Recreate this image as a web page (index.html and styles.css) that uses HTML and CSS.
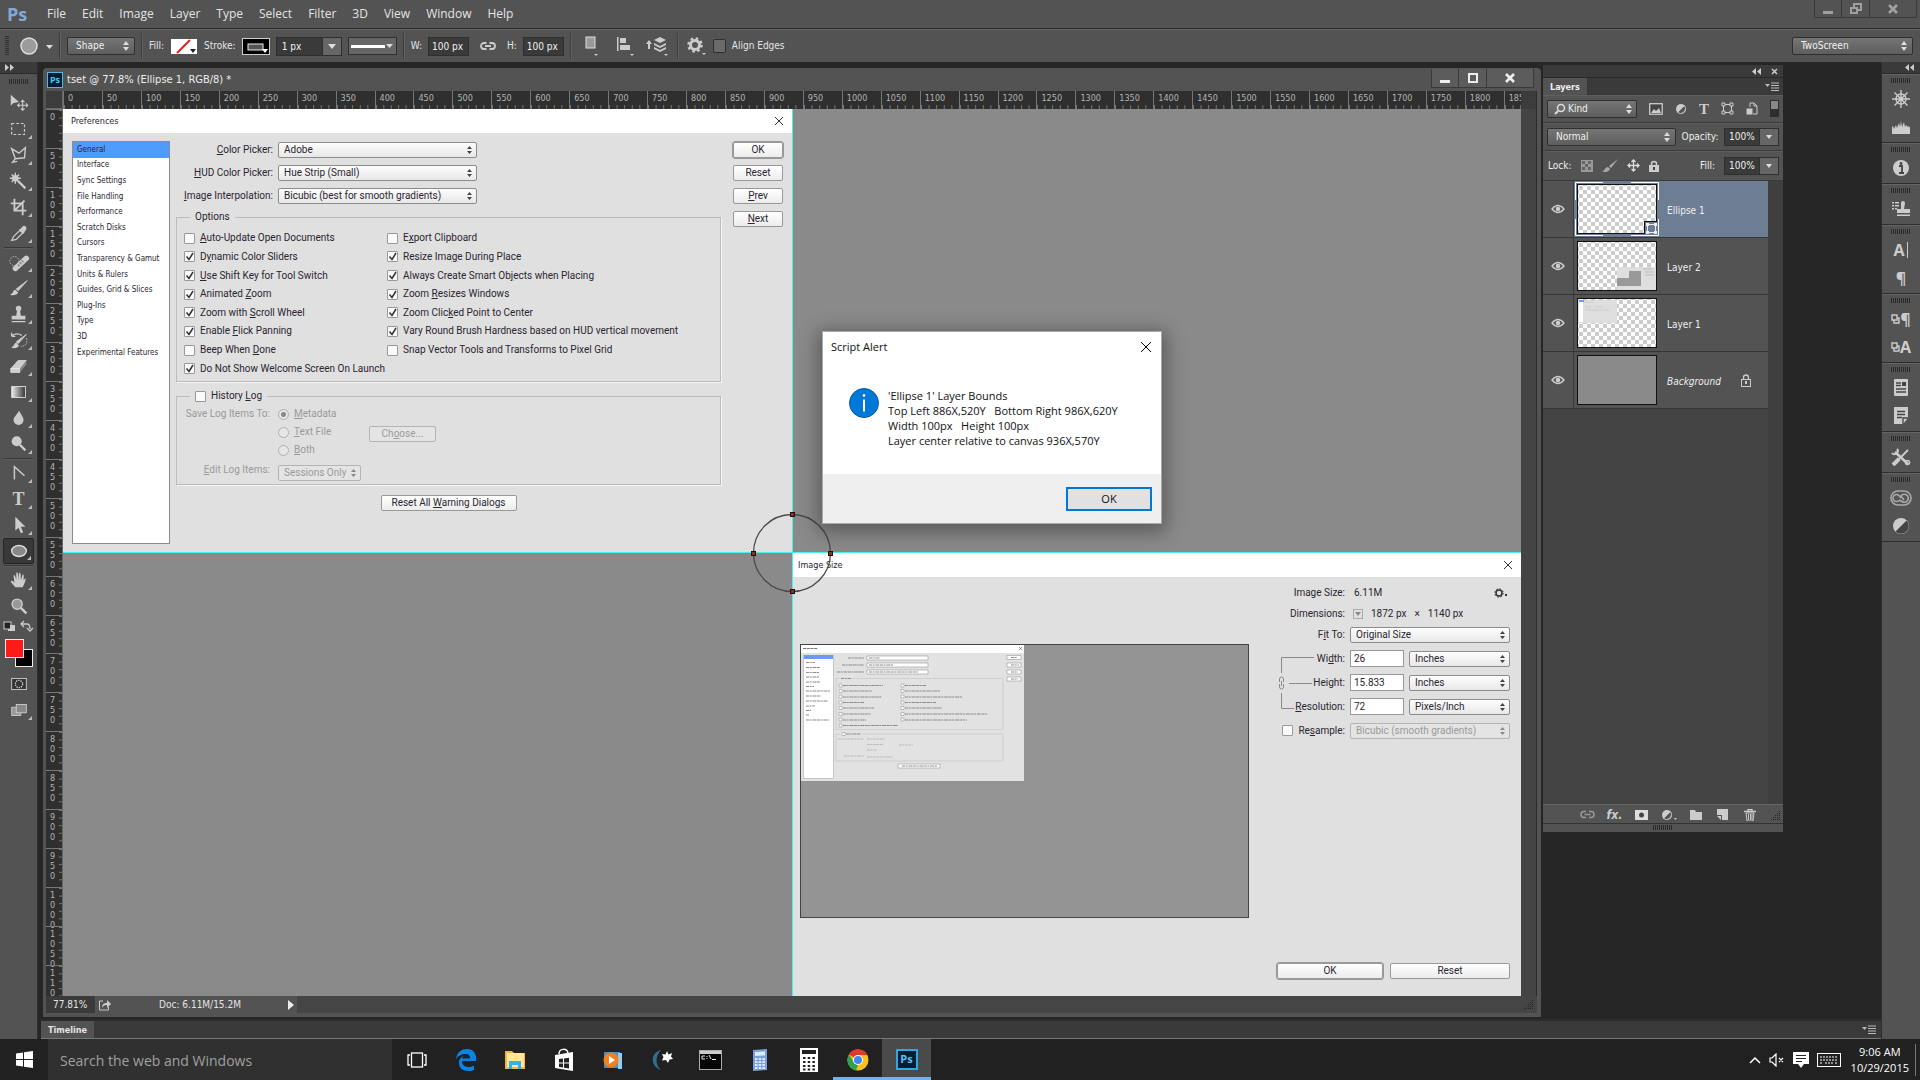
FILE: index.html
```html
<!DOCTYPE html>
<html lang="en">
<head>
<meta charset="utf-8">
<title>tset @ 77.8% (Ellipse 1, RGB/8)</title>
<link rel="stylesheet" href="styles.css">
</head>
<body>
<header class="menubar">
  <span class="ps-logo">Ps</span>
  <nav class="menus">
    <a href="#">File</a><a href="#">Edit</a><a href="#">Image</a><a href="#">Layer</a><a href="#">Type</a><a href="#">Select</a><a href="#">Filter</a><a href="#">3D</a><a href="#">View</a><a href="#">Window</a><a href="#">Help</a>
  </nav>
  <div class="win-buttons">
    <button aria-label="Minimize"><svg width="12" height="12"><rect x="1" y="8" width="10" height="3" fill="#a0a0a0"/></svg></button>
    <button aria-label="Restore"><svg width="14" height="12" fill="none" stroke="#a0a0a0" stroke-width="2"><path d="M5 4V1h7v6H9M2 5h6v5H2z"/></svg></button>
    <button class="wide" aria-label="Close"><svg width="12" height="12" stroke="#a0a0a0" stroke-width="2.6"><path d="M2 2l8 8M10 2l-8 8"/></svg></button>
  </div>
</header>

<section class="optbar">
  <span class="grip-v"></span>
  <button class="ghost preset" aria-label="Tool preset"><svg width="32" height="20"><circle cx="10" cy="10" r="8" fill="#9c9c9c" stroke="#ddd" stroke-width="1.5"/><path d="M27 9h7l-3.500 4z" fill="#ddd"/></svg></button>
  <span class="vsep"></span>
  <select class="dark w68" aria-label="Tool mode"><option>Shape</option></select>
  <span class="vsep"></span>
  <span class="lbl">Fill:</span>
  <button class="swatch" aria-label="Fill"><svg width="28" height="17"><rect x="1" y="1" width="26" height="15" fill="#fff"/><path d="M7 15L20 2" stroke="#d22" stroke-width="2"/><path d="M20 11h6l-3 4z" fill="#222"/></svg></button>
  <span class="lbl">Stroke:</span>
  <button class="swatch" aria-label="Stroke"><svg width="28" height="17"><rect width="28" height="17" fill="#ccc"/><rect x="1" y="1" width="26" height="15" fill="#000"/><rect x="6" y="6" width="15" height="6" fill="#555" stroke="#eee"/><path d="M20 11h6l-3 4z" fill="#fff"/></svg></button>
  <span class="combo"><input class="w46" aria-label="Stroke width" value="1 px"><button aria-label="Stroke width presets"><svg width="8" height="5"><path d="M0 0h8L4 5z" fill="#ddd"/></svg></button></span>
  <button class="dark linebtn" aria-label="Stroke style"><svg width="42" height="8"><rect y="3" width="34" height="3" fill="#fff"/><path d="M35 2h7l-3.500 4z" fill="#ddd"/></svg></button>
  <span class="vsep"></span>
  <label class="lbl" for="ow">W:</label><input class="num" id="ow" value="100 px">
  <svg class="link" width="16" height="12" fill="none" stroke="#ccc" stroke-width="1.8"><path d="M6.500 3H4a3 3 0 0 0 0 6h2.500M9.500 3H12a3 3 0 0 1 0 6H9.500M5 6h6"/></svg>
  <label class="lbl" for="oh">H:</label><input class="num" id="oh" value="100 px">
  <span class="vsep"></span>
  <button class="ghost op" aria-label="Path operations"><svg width="22" height="22"><rect x="6" y="2" width="9" height="11" fill="#9a9a9a" stroke="#ddd"/><path d="M14 19h4l-2 2z" fill="#ccc"/></svg></button>
  <button class="ghost op" aria-label="Path alignment"><svg width="22" height="22" fill="#ccc"><path d="M4 2h1.500v14H4zM7 3h6v5H7zM7 10h10v5H7z"/><path d="M17 19h4l-2 2z"/></svg></button>
  <button class="ghost op" aria-label="Path arrangement"><svg width="26" height="22" fill="#ccc"><path d="M16 2l6 3-6 3-6-3zM10 8l6 3 6-3v2l-6 3-6-3zM10 12l6 3 6-3v2l-6 3-6-3z"/><path d="M5 5l3 4H6v5H4V9H2z"/><path d="M20 19h4l-2 2z"/></svg></button>
  <span class="vsep"></span>
  <button class="ghost" aria-label="Options"><svg width="22" height="22"><circle cx="10" cy="10" r="4.500" fill="none" stroke="#ccc" stroke-width="3"/><circle cx="10" cy="10" r="6.500" fill="none" stroke="#ccc" stroke-width="2.500" stroke-dasharray="2.500 2.600"/><path d="M17 18h4l-2 2z" fill="#ccc"/></svg></button>
  <input type="checkbox" class="dchk" id="align"><label class="lbl" for="align">Align Edges</label>
  <select class="dark ws" aria-label="Workspace"><option>TwoScreen</option></select>
</section>

<main class="work">
  <aside class="tools">
    <div class="strip left"><svg width="11" height="7" fill="#ccc"><path d="M0 0l4 3.500L0 7zM5 0l4 3.500L5 7z"/></svg></div>
    <span class="grip-h"></span>
    <button aria-label="Move"><svg viewBox="0 0 24 24"><path d="M3 3v12l3-3 6-1z" fill="#ccc"/><path d="M16 9v11M10.500 14.500h11M14 11l2-2 2 2M14 18l2 2 2-2M12.500 12.500l-2 2 2 2M19.500 12.500l2 2-2 2" fill="none" stroke="#ccc" stroke-width="1.200"/></svg></button>
    <button class="more" aria-label="Marquee"><svg viewBox="0 0 24 24"><rect x="4" y="6" width="14" height="12" fill="none" stroke="#ccc" stroke-width="1.300" stroke-dasharray="3 2"/></svg></button>
    <button class="more" aria-label="Lasso"><svg viewBox="0 0 24 24"><path d="M4 5l8 5 7-6-1 11-10 1zM8 16l-3 4 5-1" fill="none" stroke="#ccc" stroke-width="1.500"/></svg></button>
    <button class="more" aria-label="Magic wand"><svg viewBox="0 0 24 24"><path d="M8 3v12M2 9h12M4 5l8 8M12 5l-8 8" stroke="#ccc" stroke-width="1.500"/><circle cx="8" cy="9" r="3.500" fill="#ccc"/><path d="M11 12l8 8" stroke="#ccc" stroke-width="2.500"/></svg></button>
    <button class="more" aria-label="Crop"><svg viewBox="0 0 24 24"><path d="M7 3v13h13M3 8h13v13M7 16l11-11" fill="none" stroke="#ccc" stroke-width="2"/></svg></button>
    <button class="more" aria-label="Eyedropper"><svg viewBox="0 0 24 24"><path d="M4 20l2-4 7-7 3 3-7 7z" fill="none" stroke="#ccc" stroke-width="1.300"/><path d="M12 8l5 5 1-2 2-3c1-3-3-5-4-3l-2 2z" fill="#ccc"/></svg></button>
    <hr>
    <button class="more" aria-label="Healing brush"><svg viewBox="0 0 24 24"><path d="M8 19L20 8" stroke="#ccc" stroke-width="6" stroke-linecap="round"/><path d="M11 16l6-6" stroke="#888" stroke-width="3" stroke-dasharray="1.500 1.500"/><circle cx="7" cy="11" r="5" fill="none" stroke="#ccc" stroke-dasharray="1.500 1.500"/></svg></button>
    <button class="more" aria-label="Brush"><svg viewBox="0 0 24 24"><path d="M21 4L11 15l-2-2z" fill="#ccc" stroke="#ccc"/><path d="M2 19c4 0 3-5 6-5l3 3c-1 3-6 4-9 2z" fill="#ccc"/></svg></button>
    <button class="more" aria-label="Clone stamp"><svg viewBox="0 0 24 24" fill="#ccc"><circle cx="11.500" cy="6" r="3"/><path d="M10 7h3l1 7h5v4H4v-4h5zM4 19.500h15v1.500H4z"/></svg></button>
    <button class="more" aria-label="History brush"><svg viewBox="0 0 24 24"><path d="M20 6L11 16l-2-2z" fill="#ccc" stroke="#ccc"/><path d="M3 20c4 0 3-5 6-5l3 3c-1 3-6 4-9 2z" fill="#ccc"/><path d="M4 8c3-4 8-3 11-1M4 8V4M4 8h4" fill="none" stroke="#ccc" stroke-width="1.500"/><path d="M20 10c2 6-2 9-6 9" fill="none" stroke="#ccc" stroke-dasharray="1.500 1.500"/></svg></button>
    <button class="more" aria-label="Eraser"><svg viewBox="0 0 24 24"><path d="M3 15l8-9h9l-7 9zM3 15h10v4H3z" fill="#ccc" stroke="#eee" stroke-width=".7"/><path d="M13 15l7-9v4l-7 9z" fill="#888"/></svg></button>
    <button class="more" aria-label="Gradient"><svg viewBox="0 0 24 24"><defs><linearGradient id="gr"><stop stop-color="#eee"/><stop offset="1" stop-color="#333"/></linearGradient></defs><rect x="4" y="6" width="15" height="12" fill="url(#gr)" stroke="#ddd"/></svg></button>
    <button class="more" aria-label="Blur"><svg viewBox="0 0 24 24"><path d="M12 4c2 4 5 7 5 10a5.500 5.500 0 0 1-11 0c0-3 4-6 6-10z" fill="#ccc"/></svg></button>
    <button class="more" aria-label="Dodge"><svg viewBox="0 0 24 24"><circle cx="9.500" cy="9" r="5.500" fill="#ccc"/><path d="M13 13l6 6" stroke="#ccc" stroke-width="2.500"/></svg></button>
    <hr>
    <button class="more" aria-label="Pen"><svg viewBox="0 0 24 24"><path d="M7 19V5l11 10" fill="none" stroke="#ccc" stroke-width="1.600"/></svg></button>
    <button class="more serif" aria-label="Type">T</button>
    <button class="more" aria-label="Path selection"><svg viewBox="0 0 24 24"><path d="M8 3v15l3.500-3 2.500 6 2.500-1-2.500-6h5z" fill="#ccc"/></svg></button>
    <button class="more on" aria-label="Ellipse"><svg viewBox="0 0 24 24"><ellipse cx="12" cy="12" rx="8" ry="6" fill="#888" stroke="#ddd" stroke-width="1.500"/></svg></button>
    <hr>
    <button class="more" aria-label="Hand"><svg viewBox="0 0 24 24"><path d="M8 20c-2-3-5-5-5-7 2-1 3 1 4 2L6 7c2-1 2 1 3 5V4c2-1 2 1 2 8l1-8c2 0 2 1 2 8l2-6c2 0 1 3 1 6l2-2c1 1-1 6-3 10z" fill="#ccc"/></svg></button>
    <button aria-label="Zoom"><svg viewBox="0 0 24 24"><circle cx="10" cy="10" r="5.500" fill="#999" stroke="#ccc" stroke-width="1.500"/><path d="M14 14l6 6" stroke="#ccc" stroke-width="2.800"/></svg></button>
    <svg class="swatches" width="38" height="52"><rect x="4" y="3" width="7" height="7" fill="#222" stroke="#ccc"/><path d="M10 6h5v6H8v-2h2z" fill="#ccc"/><path d="M22 5h5q3 0 3 5M24 2l-3 3 3 3M27 9l3 3 3-3" fill="none" stroke="#ccc" stroke-width="1.300"/><rect x="15.500" y="30.500" width="17" height="17" fill="#000" stroke="#eee"/><rect x="5.500" y="20.500" width="18" height="18" fill="#ff1a1a" stroke="#eee"/></svg>
    <button aria-label="Quick mask"><svg viewBox="0 0 24 24"><rect x="4" y="6" width="16" height="12" fill="#333" stroke="#ccc"/><circle cx="12" cy="12" r="4" fill="none" stroke="#ccc" stroke-width="1.500" stroke-dasharray="1.500 1"/></svg></button>
    <button class="more" aria-label="Screen mode"><svg viewBox="0 0 24 24"><path d="M4 9h10v9H4z" fill="#999" stroke="#ccc"/><rect x="9" y="6" width="11" height="9" fill="#888" stroke="#ccc"/></svg></button>
  </aside>

  <div class="mid">
    <div class="stage">
      <section class="docwin">
        <div class="doctitle">
          <span class="ps-mini">Ps</span><span class="docname">tset @ 77.8% (Ellipse 1, RGB/8) *</span>
          <div class="win-buttons doc">
            <button aria-label="Minimize document"><svg width="12" height="12"><rect x="1" y="8" width="10" height="3" fill="#eee"/></svg></button>
            <button aria-label="Maximize document"><svg width="12" height="12"><path d="M2 2h8v8H2z" fill="none" stroke="#eee" stroke-width="2"/></svg></button>
            <button class="wide" aria-label="Close document"><svg width="12" height="12" stroke="#eee" stroke-width="2.600"><path d="M2 2l8 8M10 2l-8 8"/></svg></button>
          </div>
        </div>
        <div class="docgrid">
          <div class="corner"></div>
          <div class="ruler-x" id="rx"></div>
          <div class="gutter top"></div>
          <div class="ruler-y" id="ry"></div>
          <div class="canvas">
            <section class="dlg prefs">
              <div class="dlg-title"><span>Preferences</span><button class="x" aria-label="Close preferences"><svg width="10" height="10" stroke="#333"><path d="M1 1l8 8M9 1L1 9"/></svg></button></div>
              <div class="prefs-body">
                <ul class="cats">
                  <li class="sel">General</li><li>Interface</li><li>Sync Settings</li><li>File Handling</li><li>Performance</li><li>Scratch Disks</li><li>Cursors</li><li>Transparency &amp; Gamut</li><li>Units &amp; Rulers</li><li>Guides, Grid &amp; Slices</li><li>Plug-Ins</li><li>Type</li><li>3D</li><li>Experimental Features</li>
                </ul>
                <div class="prefs-main">
                  <div class="pickers">
                    <label for="cp"><u>C</u>olor Picker:</label><select class="light" id="cp"><option>Adobe</option></select>
                    <label for="hp"><u>H</u>UD Color Picker:</label><select class="light" id="hp"><option>Hue Strip (Small)</option></select>
                    <label for="ii"><u>I</u>mage Interpolation:</label><select class="light" id="ii"><option>Bicubic (best for smooth gradients)</option></select>
                  </div>
                  <fieldset>
                    <legend>Options</legend>
                    <div class="opts">
                      <label><input type="checkbox"><span><u>A</u>uto-Update Open Documents</span></label>
                      <label><input type="checkbox"><span>E<u>x</u>port Clipboard</span></label>
                      <label><input type="checkbox" checked><span>D<u>y</u>namic Color Sliders</span></label>
                      <label><input type="checkbox" checked><span>Resize Ima<u>g</u>e During Place</span></label>
                      <label><input type="checkbox" checked><span><u>U</u>se Shift Key for Tool Switch</span></label>
                      <label><input type="checkbox" checked><span>Always Create Smart Ob<u>j</u>ects when Placing</span></label>
                      <label><input type="checkbox" checked><span>Animated <u>Z</u>oom</span></label>
                      <label><input type="checkbox" checked><span>Zoom <u>R</u>esizes Windows</span></label>
                      <label><input type="checkbox" checked><span>Zoom with <u>S</u>croll Wheel</span></label>
                      <label><input type="checkbox" checked><span>Zoom Clic<u>k</u>ed Point to Center</span></label>
                      <label><input type="checkbox" checked><span>Enable <u>F</u>lick Panning</span></label>
                      <label><input type="checkbox" checked><span>Vary Round Brush Hardness based on HUD vertical movement</span></label>
                      <label><input type="checkbox"><span>Beep When <u>D</u>one</span></label>
                      <label><input type="checkbox"><span>Snap Vector Tools and Transforms to Pixel Grid</span></label>
                      <label><input type="checkbox" checked><span>Do Not Show Welcome Screen On Launch</span></label>
                    </div>
                  </fieldset>
                  <fieldset class="log">
                    <legend><label><input type="checkbox"><span>History <u>L</u>og</span></label></legend>
                    <div class="hist">
                      <span class="r">Save Log Items To:</span>
                      <label class="meta"><input type="radio" name="log" checked disabled><span><u>M</u>etadata</span></label>
                      <label class="file"><input type="radio" name="log" disabled><span><u>T</u>ext File</span></label>
                      <button class="pbtn choose" disabled>Ch<u>o</u>ose...</button>
                      <label class="both"><input type="radio" name="log" disabled><span><u>B</u>oth</span></label>
                      <label class="r edit" for="el"><u>E</u>dit Log Items:</label>
                      <select class="light sess" id="el" disabled><option>Sessions Only</option></select>
                    </div>
                  </fieldset>
                  <button class="pbtn resetall">Reset All <u>W</u>arning Dialogs</button>
                </div>
                <div class="prefs-btns">
                  <button class="pbtn def">OK</button><button class="pbtn">Reset</button><button class="pbtn"><u>P</u>rev</button><button class="pbtn"><u>N</u>ext</button>
                </div>
              </div>
            </section>

            <section class="dlg imgsize">
              <div class="dlg-title"><span>Image Size</span><button class="x" aria-label="Close image size"><svg width="10" height="10" stroke="#333"><path d="M1 1l8 8M9 1L1 9"/></svg></button></div>
              <div class="is-body">
                <div class="preview">
                  <svg viewBox="0 0 447 272" width="100%">
                    <rect width="223" height="136" fill="#e2e2e2"/><rect width="223" height="8" fill="#fff"/>
                    <path d="M2 3.500h15" stroke="#777" stroke-dasharray="3 .7"/><path d="M218 2l3 3M221 2l-3 3" stroke="#555" stroke-width=".6"/>
                    <rect x="2.500" y="10.500" width="30" height="123" fill="#fff" stroke="#aaa" stroke-width=".6"/><rect x="3" y="10" width="29" height="4" fill="#6a9cf0"/>
                    <g fill="none" stroke="#8c8c8c" stroke-width="1.200" stroke-dasharray="3 .6 2 .8 4 .5"><path d="M5 12.500h8M5 17.500h9M5 22.500h14M5 27.500h13M5 32h13M5 37h14M5 41.500h8M5 46h24M5 51h15M5 56h22M5 61h9M5 65.500h5M5 70h3M5 75h23"/>
                    <path d="M47 13h16M41 20h22M36 27h27M40 33.500h10"/><path d="M42 40.500h40M42 46h29M42 52h39M42 57.500h21M42 63h31M42 69h28M42 75h23M42 80.500h55M104 40.500h21M104 46h35M104 52h57M104 57.500h31M104 63h37M104 69h82M104 75h62M45 89h15"/></g>
                    <g fill="#fff" stroke="#999" stroke-width=".6"><path d="M66 11h61v4H66zM66 18h61v4H66zM66 25h61v4H66zM206 10.500h14v4H206zM206 18h14v4H206zM206 25h14v4H206zM206 32h14v4H206zM97 119h42v4H97z"/><path d="M38 39h3v3H38zM38 44.500h3v3H38zM38 50h3v3H38zM38 56h3v3H38zM38 61.500h3v3H38zM38 67.500h3v3H38zM38 73h3v3H38zM38 79h3v3H38zM100 39h3v3H100zM100 44.500h3v3H100zM100 50h3v3H100zM100 56h3v3H100zM100 61.500h3v3H100zM100 67.500h3v3H100zM100 73h3v3H100zM41 87.500h3v3H41z"/></g>
                    <g fill="none" stroke="#8c8c8c" stroke-dasharray="3 .6 2 .8 4 .5"><path d="M68 13h11M68 20h24M68 27h49M210 12.500h6M210 20h8M210 27h7M210 34h7M101 121h35"/></g>
                    <g fill="none" stroke="#bbb" stroke-dasharray="3 .6 2 .8"><path d="M37 94h26M66 94h18M66 99.500h16M66 105h10M43 111h20M66 112h26M98 100h14"/></g>
                    <path d="M35 33.500h3M51 33.500h151v51H35V33.500" fill="none" stroke="#c4c4c4" stroke-width=".6"/><path d="M39 89h-4v27h167V89H61" fill="none" stroke="#c4c4c4" stroke-width=".6"/>
                  </svg>
                </div>
                <div class="is-form">
                  <span class="r">Image Size:</span><span class="val">6.11M<button class="x" aria-label="Image size options"><svg width="14" height="10"><circle cx="5" cy="5" r="3" fill="none" stroke="#333" stroke-width="1.500"/><circle cx="5" cy="5" r="4.200" fill="none" stroke="#333" stroke-dasharray="1.600 1.700"/><rect x="11" y="6" width="2" height="2" fill="#333"/></svg></button></span>
                  <span class="r">Dimensions:</span><span class="val dim"><button class="tiny" aria-label="Units"><svg width="6" height="4"><path d="M0 0h6L3 4z" fill="#888"/></svg></button><span>1872 px</span><span>×</span><span>1140 px</span></span>
                  <label class="r" for="fit">F<u>i</u>t To:</label><select class="light full" id="fit"><option>Original Size</option></select>
                  <svg class="bracket" width="74" height="72" fill="none" stroke="#8a8a8a"><path d="M43 10.500H10.500V26M10.500 46v15.500H23M18 36.500h23"/><path d="M8.500 35v-3q0-2 2-2t2 2v3M8.500 37v3q0 2 2 2t2-2v-3M10.500 34v5"/></svg>
                  <label class="r" for="iw">Wi<u>d</u>th:</label><input type="text" id="iw" value="26"><select class="light" aria-label="Width unit"><option>Inches</option></select>
                  <label class="r" for="ih">Hei<u>g</u>ht:</label><input type="text" id="ih" value="15.833"><select class="light" aria-label="Height unit"><option>Inches</option></select>
                  <label class="r" for="ir"><u>R</u>esolution:</label><input type="text" id="ir" value="72"><select class="light" aria-label="Resolution unit"><option>Pixels/Inch</option></select>
                  <label class="r rs"><input type="checkbox"><span>Re<u>s</u>ample:</span></label><select class="light full" aria-label="Resample method" disabled><option>Bicubic (smooth gradients)</option></select>
                </div>
              </div>
              <div class="is-btns"><button class="pbtn def">OK</button><button class="pbtn">Reset</button></div>
            </section>

            <span class="guide v"></span><span class="guide h"></span>
            <svg class="shape" width="84" height="84"><circle cx="42" cy="42" r="38.500" fill="none" stroke="#4a4a4a" stroke-width="1.300"/><g fill="#a22" stroke="#111"><rect x="40.500" y="1.500" width="4" height="4"/><rect x="40.500" y="78.500" width="4" height="4"/><rect x="1.500" y="40.500" width="4" height="4"/><rect x="78.500" y="40.500" width="4" height="4"/></g></svg>

            <section class="alert" role="dialog" aria-label="Script Alert">
              <div class="alert-title"><span>Script Alert</span><button class="x" aria-label="Close alert"><svg width="12" height="12" stroke="#000"><path d="M1 1l10 10M11 1L1 11"/></svg></button></div>
              <div class="alert-body">
                <svg width="30" height="30"><circle cx="15" cy="15" r="14.500" fill="#0078d7" stroke="#0a5aa0"/><path d="M15 11.500v12" stroke="#fff" stroke-width="2"/><circle cx="15" cy="7.500" r="1.400" fill="#fff"/></svg>
                <p>'Ellipse 1' Layer Bounds<br>Top Left 886X,520Y&nbsp;&nbsp; Bottom Right 986X,620Y<br>Width 100px&nbsp;&nbsp; Height 100px<br>Layer center relative to canvas 936X,570Y</p>
              </div>
              <div class="alert-foot"><button>OK</button></div>
            </section>
          </div>
          <div class="gutter"></div>
        </div>
        <div class="status">
          <span class="zoom">77.81%</span>
          <div class="docinfo"><svg width="14" height="12" fill="none" stroke="#ccc"><path d="M5 2H1.500v9h9V8"/><path d="M4 9c0-4 2-5 5-5V1l4 4-4 4V6C6 6 5 7 4 9z" fill="#ccc" stroke="none"/></svg><span>Doc: 6.11M/15.2M</span><svg width="6" height="10"><path d="M0 0l6 5-6 5z" fill="#eee"/></svg></div>
          <svg class="rsz" width="16" height="17" stroke="#222" stroke-dasharray="1 1"><path d="M3 12.500h9M5 10.500h7M7 8.500h5M9 6.500h3M11 4.500h1"/></svg>
        </div>
      </section>

      <section class="layers">
        <div class="strip right"><svg width="10" height="7" fill="#ccc"><path d="M4 0L0 3.500 4 7zM9 0L5 3.500 9 7z"/></svg><svg width="7" height="7" stroke="#ccc" stroke-width="1.500"><path d="M1 1l5 5M6 1L1 6"/></svg></div>
        <div class="tabs"><span class="tab">Layers</span><svg width="14" height="9"><path d="M0 2h5L2.500 5z" fill="#bbb"/><path d="M6 1h8M6 3.500h8M6 6h8M6 8.500h8" stroke="#bbb"/></svg></div>
        <div class="lrow filter">
          <select class="dark kind" aria-label="Filter"><option>Kind</option></select>
          <button class="ghost" aria-label="Pixel layers"><svg width="14" height="12"><rect x=".7" y=".7" width="12.500" height="10.500" fill="#444" stroke="#ccc" stroke-width="1.300"/><path d="M2 10l3-4 2 2 3-3 2 5z" fill="#ccc"/></svg></button>
          <button class="ghost" aria-label="Adjustment layers"><svg width="12" height="12"><circle cx="6" cy="6" r="5" fill="#ccc"/><path d="M9.500 2.500a5 5 0 0 1-7 7z" fill="#555" stroke="#ccc" stroke-width=".8"/></svg></button>
          <button class="ghost t" aria-label="Type layers">T</button>
          <button class="ghost" aria-label="Shape layers"><svg width="13" height="13" fill="none" stroke="#ccc"><path d="M2.500 2.500h8v8h-8z"/><path d="M1 1h3v3H1zM9 1h3v3H9zM1 9h3v3H1zM9 9h3v3H9z" fill="#555"/></svg></button>
          <button class="ghost" aria-label="Smart objects"><svg width="12" height="13" fill="none" stroke="#ccc"><path d="M4 5V1h4l3 3v8H7"/><path d="M8 1v3h3"/><rect x="1" y="7" width="5" height="5" fill="#ccc"/></svg></button>
          <svg width="9" height="17"><rect width="9" height="17" fill="#2e2e2e"/><rect x="1" y="1" width="7" height="8" fill="#888"/></svg>
        </div>
        <div class="lrow">
          <select class="dark blend" aria-label="Blend mode"><option>Normal</option></select>
          <label class="lbl" for="op">Opacity:</label>
          <span class="combo"><input class="w35" id="op" value="100%"><button aria-label="Opacity slider"><svg width="6" height="4"><path d="M0 0h6L3 4z" fill="#ddd"/></svg></button></span>
        </div>
        <div class="lrow lock">
          <span class="lbl">Lock:</span>
          <svg width="12" height="12"><rect width="12" height="12" fill="#999"/><path d="M1 1h3v3H1zM7 1h3v3H7zM4 4h3v3H4zM1 7h3v3H1zM7 7h3v3H7z" fill="#666"/></svg>
          <svg width="16" height="14" fill="#aaa"><path d="M16 0L9 9 7 7zM0 12c3 0 3-4 6-4l2 2c-1 3-5 4-8 2z"/></svg>
          <svg width="13" height="13" fill="none" stroke="#ddd" stroke-width="1.300"><path d="M6.500 1v11M1 6.500h11M4.500 3l2-2 2 2M4.500 10l2 2 2-2M3 4.500l-2 2 2 2M10 4.500l2 2-2 2"/></svg>
          <svg width="10" height="12"><path d="M2.500 6V4a2.500 2.500 0 0 1 5 0v2" fill="none" stroke="#ccc" stroke-width="1.500"/><rect y="5" width="10" height="7" fill="#ccc"/><rect x="4" y="7" width="2" height="3" fill="#444"/></svg>
          <label class="lbl push" for="fl">Fill:</label>
          <span class="combo"><input class="w35" id="fl" value="100%"><button aria-label="Fill slider"><svg width="6" height="4"><path d="M0 0h6L3 4z" fill="#ddd"/></svg></button></span>
        </div>
        <div class="llist">
          <ul>
            <li class="active"><span class="eye"><svg width="14" height="10"><path d="M1 5q6-7 12 0-6 7-12 0z" fill="none" stroke="#ccc" stroke-width="1.300"/><circle cx="7" cy="5" r="2.300" fill="#ccc"/></svg></span>
              <svg class="thumb" width="84" height="54"><defs><pattern id="chk" width="8" height="8" patternUnits="userSpaceOnUse"><rect width="8" height="8" fill="#fff"/><path d="M0 0h4v4H0zM4 4h4v4H4z" fill="#ccc"/></pattern></defs><path d="M.5 18V.500H28M56 .500H83.500V18M83.500 37V53.500H56M28 53.500H.500V37" fill="none" stroke="#fff"/><rect x="2.500" y="2.500" width="79" height="49" fill="url(#chk)" stroke="#111"/><rect x="69" y="39" width="14" height="14" fill="#6d7d94"/><path d="M69.500 52V39.500H82" stroke="#111" fill="none"/><path d="M72.500 42.500h8v8h-8z" fill="none" stroke="#eee"/><path d="M71 41h3v3h-3zM79 41h3v3h-3zM71 49h3v3h-3zM79 49h3v3h-3z" fill="#eee"/></svg><span class="name">Ellipse 1</span></li>
            <li><span class="eye"><svg width="14" height="10"><path d="M1 5q6-7 12 0-6 7-12 0z" fill="none" stroke="#ccc" stroke-width="1.300"/><circle cx="7" cy="5" r="2.300" fill="#ccc"/></svg></span>
              <svg class="thumb" width="84" height="54"><rect x="2.500" y="2.500" width="79" height="49" fill="url(#chk)" stroke="#111"/><rect x="42" y="28" width="39" height="23" fill="#dedede"/><path d="M54 32h12v15H42v-8h12z" fill="#999"/><path d="M68 30h10M70 33h9M70 36h9" stroke="#bbb"/></svg><span class="name">Layer 2</span></li>
            <li><span class="eye"><svg width="14" height="10"><path d="M1 5q6-7 12 0-6 7-12 0z" fill="none" stroke="#ccc" stroke-width="1.300"/><circle cx="7" cy="5" r="2.300" fill="#ccc"/></svg></span>
              <svg class="thumb" width="84" height="54"><rect x="2.500" y="2.500" width="79" height="49" fill="url(#chk)" stroke="#111"/><rect x="3" y="4" width="39" height="23" fill="#dedede"/><rect x="4" y="6" width="4" height="20" fill="#fff"/><rect x="4" y="4" width="5" height="2" fill="#6a9cf0"/><path d="M10 6h8M10 11h6M20 11h8M10 14h24" stroke="#ccc"/></svg><span class="name">Layer 1</span></li>
            <li><span class="eye"><svg width="14" height="10"><path d="M1 5q6-7 12 0-6 7-12 0z" fill="none" stroke="#ccc" stroke-width="1.300"/><circle cx="7" cy="5" r="2.300" fill="#ccc"/></svg></span>
              <svg class="thumb" width="84" height="54"><rect x="2.500" y="2.500" width="79" height="49" fill="#8a8a8a" stroke="#111"/></svg><span class="name bg">Background</span><svg class="lk" width="10" height="13"><path d="M2.500 5V3.500a2.500 2.500 0 0 1 5 0V5" fill="none" stroke="#ccc" stroke-width="1.300"/><rect x=".5" y="5.500" width="9" height="7" fill="none" stroke="#ccc"/><rect x="4" y="7" width="2" height="3" fill="#ccc"/></svg></li>
          </ul>
        </div>
        <div class="lfoot">
          <button class="ghost" aria-label="Link layers"><svg width="15" height="9" fill="none" stroke="#999" stroke-width="1.500"><path d="M6 1.500H4a3 3 0 0 0 0 6h2M9 1.500h2a3 3 0 0 1 0 6H9M4.500 4.500h6"/></svg></button>
          <button class="ghost fx" aria-label="Layer style">fx.</button>
          <button class="ghost" aria-label="Layer mask"><svg width="13" height="10"><rect width="13" height="10" fill="#ddd"/><circle cx="6.500" cy="5" r="2.500" fill="#444"/></svg></button>
          <button class="ghost" aria-label="Adjustment layer"><svg width="16" height="12"><circle cx="6" cy="6" r="5" fill="#ccc"/><path d="M9.500 2.500a5 5 0 0 1-7 7z" fill="#555" stroke="#ccc" stroke-width=".8"/><path d="M13 9h3l-1.500 2z" fill="#ccc"/></svg></button>
          <button class="ghost" aria-label="Group"><svg width="12" height="10"><path d="M0 0h5l1 2h6v8H0z" fill="#ccc"/></svg></button>
          <button class="ghost" aria-label="New layer"><svg width="11" height="11"><path d="M0 0h11v11H5V6H0z" fill="#ccc"/><path d="M0 7h4v4z" fill="#ccc"/></svg></button>
          <button class="ghost" aria-label="Delete layer"><svg width="12" height="12" fill="none" stroke="#ccc"><path d="M0 2.500h12M4 2V.500h4V2" stroke-width="1.300"/><path d="M2 4h8l-1 8H3zM4.500 5v6M6.500 5v6M8 5v6"/></svg></button>
          <svg class="rsz" width="12" height="12" stroke="#222" stroke-dasharray="1 1"><path d="M1 10.500h10M3 8.500h8M5 6.500h6M7 4.500h4M9 2.500h2"/></svg>
        </div>
        <div class="lgrip"><span class="grip-h"></span></div>
      </section>
    </div>
    <section class="timeline"><span class="tab">Timeline</span><svg width="14" height="9"><path d="M0 2h5L2.500 5z" fill="#bbb"/><path d="M6 1h8M6 3.500h8M6 6h8M6 8.500h8" stroke="#bbb"/></svg></section>
  </div>

  <aside class="dock">
    <div class="strip right"><svg width="10" height="7" fill="#ccc"><path d="M4 0L0 3.500 4 7zM9 0L5 3.500 9 7z"/></svg></div>
    <div class="grp"><span class="grip-h"></span>
      <button aria-label="Navigator"><svg width="20" height="20" stroke="#ccc" stroke-width="1.400" fill="none"><circle cx="10" cy="10" r="5"/><circle cx="10" cy="10" r="1.500"/><path d="M10 1v18M1 10h18M3.500 3.500l13 13M16.500 3.500l-13 13"/></svg></button>
      <button aria-label="Histogram"><svg width="20" height="16"><path d="M1 15V8l1-1 1 3 2-4 1 3 2-5 1 4 1-6 1 6 2-5 1 5 1-2 2 2 1-1 1 2v6z" fill="#ccc"/></svg></button></div>
    <div class="grp"><span class="grip-h"></span>
      <button aria-label="Info"><svg width="18" height="18"><circle cx="9" cy="9" r="8" fill="#ccc"/><path d="M7 7h3v7M7 14h5" stroke="#444" stroke-width="1.800" fill="none"/><circle cx="9" cy="4.500" r="1.400" fill="#444"/></svg></button></div>
    <div class="grp"><span class="grip-h"></span>
      <button aria-label="Clone source"><svg width="20" height="18" fill="#ccc"><path d="M10 3a2 2 0 0 1 4 0l-1 6h6v4H6V9h4zM6 14.500h13V16H6zM1 2h2v1.500H1zM4 2h4v1.500H4zM1 5h2v1.500H1zM4 5h4v1.500H4zM1 8h2v1.500H1zM4 8h2v1.500H4z"/></svg></button></div>
    <div class="grp"><span class="grip-h"></span>
      <button class="glyph" aria-label="Character">A<svg width="4" height="16"><path d="M2.500 0v16" stroke="#ccc"/></svg></button><button class="glyph" aria-label="Paragraph">¶</button></div>
    <div class="grp"><span class="grip-h"></span>
      <button class="glyph" aria-label="Paragraph styles"><svg width="9" height="10" fill="none" stroke="#ccc" stroke-width="1.400"><path d="M1 1h5v5H1zM6 4h2v5H3V6"/></svg>¶</button><button class="glyph" aria-label="Character styles"><svg width="9" height="10" fill="none" stroke="#ccc" stroke-width="1.400"><path d="M1 1h5v5H1zM6 4h2v5H3V6"/></svg>A</button></div>
    <div class="grp"><span class="grip-h"></span>
      <button aria-label="Layer comps"><svg width="14" height="17"><rect width="14" height="17" rx="1" fill="#ccc"/><path d="M2 4h5M2 6.500h5M2 10h10M2 13h10" stroke="#444" stroke-width="1.500"/><rect x="8" y="3" width="4" height="4" fill="#444"/></svg></button>
      <button aria-label="Notes"><svg width="14" height="17"><path d="M0 0h14v11l-5 6H0z" fill="#ccc"/><path d="M3 4.500h8M3 7.500h8M3 10.500h5M9 17v-6h5" stroke="#444" fill="none" stroke-width="1.300"/></svg></button></div>
    <div class="grp"><span class="grip-h"></span>
      <button aria-label="Tool presets"><svg width="20" height="18" fill="none" stroke="#ccc"><path d="M4 4l13 12" stroke-width="2.500"/><path d="M3 16L17 2" stroke-width="2"/><path d="M2 17l6-6" stroke-width="4"/><path d="M1 5a3 3 0 0 0 5 0 3 3 0 0 0 0-4" stroke-width="2"/><circle cx="16.500" cy="14.500" r="2" stroke-width="1.500"/></svg></button></div>
    <div class="grp"><span class="grip-h"></span>
      <button aria-label="Creative Cloud"><svg width="22" height="16" fill="none" stroke="#aaa" stroke-width="1.600"><rect x="1" y="1" width="20" height="14" rx="7"/><path d="M11 8l-2-2.500a3.500 3.500 0 1 0 0 5M9 10l3 1.500a4 4 0 1 0-1-5.500l3 4"/></svg></button>
      <button aria-label="Adjustments"><svg width="18" height="18"><circle cx="9" cy="9" r="8" fill="#ccc"/><path d="M14.500 3.500a7.500 7.500 0 0 1-11 11z" fill="#444"/></svg></button></div>
  </aside>
</main>

<footer class="taskbar">
  <button class="start" aria-label="Start"><svg width="17" height="17" fill="#fff"><path d="M0 2.500l7-1v6.500H0zM8 1.300L17 0v8H8zM0 9h7v6.500l-7-1zM8 9h9v8l-9-1.300z"/></svg></button>
  <input class="search" type="text" aria-label="Search" placeholder="Search the web and Windows">
  <div class="apps">
    <button aria-label="Task view"><svg width="20" height="16" fill="none" stroke="#fff" stroke-width="1.300"><rect x="4.500" y="1" width="11" height="14"/><path d="M3 3H1v10h2M17 3h2v10h-2"/></svg></button>
    <button aria-label="Edge"><svg width="22" height="22"><path d="M1 10C2 3 7 0 12 0c6 0 9 4 9 9v3H7c0 4 3 6 7 6 2 0 4-.6 5-1.500V21c-2 1-4 1-6 1-6 0-10-4-9-10 .5-2 2-4 5-5-1 1-2 2-2 2.500h8C15 7 14 5 11 5 6 5 3 7 1 10z" fill="#0a84e0"/></svg></button>
    <button aria-label="File Explorer"><svg width="22" height="20"><path d="M1 1h7l2 2h11v16H1z" fill="#e8b84a"/><path d="M3 3h17v14H3z" fill="#ffe796"/><path d="M5 11h12v8h-3v-4H8v4H5z" fill="#35b0e8"/></svg></button>
    <button aria-label="Store"><svg width="22" height="24"><path d="M2 7l18-3v19L2 20z" fill="#fff"/><path d="M6 6c0-6 8-6 9-1" fill="none" stroke="#fff" stroke-width="1.500"/><path d="M6 11l4-.5v4H6zM11 10.400l5-.6v4.700h-5zM6 15.500h4v4l-4-.5zM11 15.500h5v5l-5-.8z" fill="#222"/></svg></button>
    <button aria-label="Media player"><svg width="22" height="20"><path d="M2 2h16v16H2z" fill="#4b8fc0"/><path d="M16 3h4v16h-4z" fill="#9ccbe8"/><circle cx="9" cy="10" r="7.500" fill="#f08020"/><path d="M7 6l6 4-6 4z" fill="#fff"/></svg></button>
    <button aria-label="Moon star"><svg width="22" height="22"><path d="M10 1C-1 4-1 17 10 21 4 16 4 7 10 1z" fill="#2f6f92"/><path d="M16 2l1.500 3.500L21 4l-1 3.500 2 2.500-3.500.5L17 14l-2-3-4 .5 1.500-3.500L11 5l3.500.5z" fill="#fff"/></svg></button>
    <button aria-label="Command prompt"><svg width="23" height="20"><rect x=".5" y=".5" width="22" height="19" fill="#050505" stroke="#aaa"/><path d="M1 2.500h21" stroke="#ccc" stroke-width="3"/><path d="M6 6l-3 0v3h3M8 6v1M8 8v1M10 5l2 4M13 9.500h4" stroke="#eee" fill="none"/></svg></button>
    <button aria-label="Calculator blue"><svg width="18" height="24"><path d="M2 2l14-1v21l-14 1z" fill="#7b9fe0"/><path d="M4 4l10-.6v4L4 8z" fill="#d8ecff"/><path d="M4 11h10M4 14h10M4 17h10M4 20h10" stroke="#dfe9ff" stroke-width="1.800" stroke-dasharray="2.500 1.200"/></svg></button>
    <button aria-label="Calculator"><svg width="18" height="24"><rect width="18" height="24" fill="#fff"/><rect x="2" y="2" width="14" height="4" fill="#222"/><path d="M3 10h12M3 14h12M3 18h12M3 21.500h12" stroke="#222" stroke-width="2" stroke-dasharray="2.500 2.200"/></svg></button>
    <button class="run" aria-label="Chrome"><svg width="22" height="22"><circle cx="11" cy="11" r="10.500" fill="#fbc116"/><path d="M11 11L2 5.500A10.500 10.500 0 0 1 20.500 6H11z" fill="#e03a2e"/><path d="M2 5.500l5.500 8.500 3.500 2-2 5.500A10.500 10.500 0 0 1 2 5.500z" fill="#32a050"/><circle cx="11" cy="11" r="5" fill="#fff"/><circle cx="11" cy="11" r="4" fill="#4285f4"/></svg></button>
    <button class="run cur" aria-label="Photoshop"><span class="ps-task">Ps</span></button>
  </div>
  <div class="tray">
    <svg width="12" height="8" fill="none" stroke="#fff" stroke-width="1.500"><path d="M1 7l5-5 5 5"/></svg>
    <svg width="16" height="14" fill="none" stroke="#fff" stroke-width="1.200"><path d="M1 5h2l4-4v12L3 9H1zM10 5l4 4M14 5l-4 4"/></svg>
    <svg width="16" height="16"><path d="M0 0h16v12h-5l-3 4-3-4H0z" fill="#fff"/><path d="M3 3.500h10M3 6.500h10M3 9.500h6" stroke="#222"/></svg>
    <svg width="24" height="14" fill="none" stroke="#fff"><rect x=".5" y=".5" width="23" height="13"/><path d="M3 4h18M3 7h18M3 10h3M8 10h8M18 10h3" stroke-dasharray="2 1"/></svg>
    <div class="clock"><span>9:06 AM</span><span>10/29/2015</span></div>
  </div>
</footer>
<script src="rulers.js"></script>
</body>
</html>
```
FILE: styles.css
```css
* { box-sizing: border-box; }
:root {
  --ui: "DejaVu Sans Condensed", "DejaVu Sans", sans-serif;
  --win: "Open Sans", "Noto Sans", sans-serif;
  --dlg: Roboto, "Liberation Sans", sans-serif;
}
body {
  margin: 0; min-height: 100vh; display: flex; flex-direction: column;
  background: #262626; color: #e4e4e4; font: 10px/12px var(--ui); overflow-x: hidden;
}
button, input, select { font: inherit; color: inherit; margin: 0; padding: 0; border-radius: 0; }
button { border: 0; background: none; }
svg { display: block; flex: none; }
a { color: inherit; text-decoration: none; }
ul { list-style: none; margin: 0; padding: 0; }

/* menu bar */
.menubar { height: 29px; display: flex; align-items: center; background: #535353; border-bottom: 1px solid #2c2c2c; }
.ps-logo { width: 47px; padding-left: 7px; font: bold 18px/24px var(--win); color: #84a8d8; }
.menus { display: flex; gap: 16px; font: 12px/16px var(--win); }
.win-buttons { margin-left: auto; align-self: flex-start; display: flex; margin-right: 3px; }
.win-buttons button { width: 28px; height: 18px; display: grid; place-items: center; border: 1px solid #3a3a3a; border-top: 0; border-left-width: 0; }
.win-buttons button:first-child { border-left-width: 1px; }
.win-buttons .wide { width: 47px; }
.win-buttons.doc button { background: #5c5c5c; height: 19px; }

/* options bar */
.optbar { height: 33px; display: flex; align-items: center; gap: 6px; background: #535353; border-top: 1px solid #666; padding: 0 7px 0 5px; }
.ghost { display: flex; align-items: center; justify-content: center; color: #ccc; }
.preset { width: 38px; padding-left: 2px; }
.preset svg { overflow: visible; }
.op { width: 27px; }
.vsep { width: 2px; height: 26px; background: #3e3e3e; border-right: 1px solid #626262; }
.grip-v { width: 4px; height: 20px; background: repeating-linear-gradient(#2e2e2e 0 1px, #535353 1px 2px); }
.grip-h { display: block; width: 20px; height: 5px; margin: 0 auto; background: repeating-linear-gradient(90deg, #2a2a2a 0 1px, #535353 1px 2px); }
select { appearance: none; outline: none; }
select.dark {
  height: 18px; padding: 0 8px; border: 1px solid #2f2f2f; border-radius: 2px; color: #f0f0f0;
  background: url("data:image/svg+xml,%3Csvg xmlns='http://www.w3.org/2000/svg' width='6' height='10'%3E%3Cpath d='M0 4l3-4 3 4zM0 6h6l-3 4z' fill='%23ddd'/%3E%3C/svg%3E") no-repeat right 5px center, linear-gradient(#757575, #5e5e5e);
}
.w68 { width: 68px; }
.ws { width: 121px; margin-left: auto; }
.swatch { width: 28px; }
.combo { display: flex; }
.combo input, .num { height: 19px; border: 1px solid #2f2f2f; background: #3a3a3a; padding: 0 5px; color: #f0f0f0; }
.combo button { width: 19px; height: 19px; border: 1px solid #2f2f2f; border-left: 0; background: #666; display: grid; place-items: center; }
.w46 { width: 47px; }
.combo .w35 { width: 36px; height: 18px; padding: 0 4px; }
.layers .combo button { height: 18px; }
.num { width: 41px; padding: 0 3px; }
.linebtn { width: 49px; height: 18px; border: 1px solid #2f2f2f; background: #666; display: grid; place-items: center; }
.link { margin: 0 5px; }
.dchk { appearance: none; width: 13px; height: 14px; border: 1px solid #2f2f2f; border-radius: 2px; background: #6a6a6a; }

/* work area */
.work { flex: 1; display: flex; min-height: 977px; }
.strip { height: 12px; display: flex; align-items: center; gap: 9px; background: #3a3a3a; border-bottom: 1px solid #2a2a2a; padding: 0 5px; }
.strip.right { justify-content: flex-end; }
.tools { width: 38px; background: #535353; border-right: 1px solid #2e2e2e; display: flex; flex-direction: column; }
.tools .grip-h { margin: 5px auto 6px; }
.tools button { position: relative; height: 26px; width: 31px; margin: 0 auto; display: grid; place-items: center; }
.tools button svg { width: 22px; height: 22px; }
.tools .more::after { content: ""; position: absolute; right: 2px; bottom: 3px; border: 2px solid #bbb; border-top-color: transparent; border-left-color: transparent; }
.tools .on { background: #383838; border: 1px solid #262626; border-radius: 2px; }
.tools .serif { font: bold 18px/20px "Liberation Serif", serif; color: #ccc; }
.tools hr { width: 29px; height: 2px; margin: 1px auto 0; border: 0; border-top: 1px solid #383838; border-bottom: 1px solid #5e5e5e; }
.mid { flex: 1; display: flex; flex-direction: column; min-width: 0; }
.stage { flex: 1; display: flex; align-items: flex-start; padding: 3px 98px 2px 5px; gap: 2px; }

/* document window */
.docwin { flex: 1; align-self: stretch; margin-top: 3px; display: flex; flex-direction: column; background: #535353; padding: 0 4px 4px 3px; border-radius: 4px 4px 0 0; min-width: 0; }
.doctitle { height: 23px; display: flex; align-items: center; gap: 4px; padding: 1px 0 0 1px; color: #eee; }
.ps-mini { width: 16px; height: 16px; border: 1px solid #4fb8e8; background: #001d33; color: #5cc4f0; font: bold 9px/14px var(--win); text-align: center; }
.docname { font-size: 11px; }
.docgrid { flex: 1; display: grid; grid-template: 18px 1fr / 17px 1fr 16px; }
.corner { background: #3c3c3c; border-right: 1px solid #666; border-bottom: 1px solid #666; }
.gutter { background: #444; border-right: 1px solid #2c2c2c; }
.gutter.top { background: #3c3c3c; }
.ruler-x, .ruler-y { background: #2f2f2f; overflow: hidden; display: flex; color: #b4b4b4; font-size: 9px; }
.ruler-y { flex-direction: column; border-right: 1px solid #666; }
.ruler-x span { flex: none; width: calc(100% * 50 / 1872); border-left: 1px solid #777; padding-left: 4px; line-height: 15px; background: linear-gradient(90deg, #777 1px, transparent 1px) 0 100% / 20% 4px repeat-x; }
.ruler-y span { flex: none; height: calc(100% * 50 / 1140); border-top: 1px solid #777; padding: 2px 7px 0 4px; line-height: 10px; width: 16px; word-break: break-all; background: linear-gradient(#777 1px, transparent 1px) 100% 0 / 3px 20% repeat-y; }
.canvas { position: relative; display: grid; grid-template: 1fr 1fr / 1fr 1fr; background: #8a8a8a; min-width: 0; }
.guide { position: absolute; background: #4af0f0; }
.guide.v { left: 50%; top: 0; bottom: 0; width: 1px; }
.guide.h { top: 50%; left: 0; right: 0; height: 1px; margin-top: -1px; }
.shape { position: absolute; left: 50%; top: 50%; margin: -42px 0 0 -42px; }
.status { height: 17px; display: flex; align-items: center; background: #454545; font-size: 10px; }
.zoom { width: 49px; padding-left: 7px; background: #3a3a3a; line-height: 17px; }
.docinfo { width: 202px; height: 17px; display: flex; align-items: center; justify-content: space-between; background: #535353; padding: 0 3px; }
.rsz { margin-left: auto; }

/* light dialogs */
.dlg { background: #e0e0e0; color: #2a2530; font: 10px/12px var(--dlg); display: flex; flex-direction: column; min-width: 0; }
.imgsize { grid-area: 2 / 2; }
.dlg-title { height: 24px; background: #fff; display: flex; align-items: center; justify-content: space-between; padding: 0 8px; font: 9px/12px var(--ui); }
.imgsize .dlg-title { padding-left: 6px; }
.x { display: grid; place-items: center; }
select.light {
  height: 16px; width: 100%; padding: 0 5px; border: 1px solid #8c8c8c; border-radius: 2px; color: inherit;
  background: url("data:image/svg+xml,%3Csvg xmlns='http://www.w3.org/2000/svg' width='5' height='8'%3E%3Cpath d='M0 3l2.500-3L5 3zM0 5h5L2.500 8z' fill='%23444'/%3E%3C/svg%3E") no-repeat right 4px center, linear-gradient(#fdfdfd, #e8e8e8);
}
select.light:disabled, .pbtn:disabled { color: #9a9a9a; border-color: #b4b4b4; opacity: 1; }
select.light:disabled { background: url("data:image/svg+xml,%3Csvg xmlns='http://www.w3.org/2000/svg' width='5' height='8'%3E%3Cpath d='M0 3l2.500-3L5 3zM0 5h5L2.500 8z' fill='%23888'/%3E%3C/svg%3E") no-repeat right 4px center #e4e4e4; }
.pbtn { height: 16px; line-height: 14px; border: 1px solid #999; border-radius: 2px; background: linear-gradient(#fff, #ececec); white-space: nowrap; }
.pbtn:disabled { background: #e4e4e4; }
.pbtn.def { outline: 1px solid #999; }
.dlg input[type="checkbox"] { appearance: none; flex: none; width: 11px; height: 11px; border: 1px solid #999; border-radius: 1px; background: #fafafa; }
.dlg input[type="checkbox"]:checked { background: url("data:image/svg+xml,%3Csvg xmlns='http://www.w3.org/2000/svg' width='9' height='9'%3E%3Cpath d='M1.500 4.500l2.500 3 4-6.500' fill='none' stroke='%23333' stroke-width='1.500'/%3E%3C/svg%3E") #fafafa; }
.dlg input[type="radio"] { appearance: none; flex: none; width: 11px; height: 11px; border: 1px solid #b0b0b0; border-radius: 50%; background: #e6e6e6; }
.dlg input[type="radio"]:checked { background: radial-gradient(#888 0 2px, #e6e6e6 3px); }
.dlg label { display: flex; align-items: center; gap: 5px; white-space: nowrap; }
.pickers label, .dlg label.r[for] { display: block; text-align: right; }
.prefs-body { flex: 1; display: grid; grid-template-columns: 98px minmax(0, 1fr) 50px; padding: 8px 9px 9px 9px; }
.cats { border: 1px solid #8c8c8c; background: #fff; font: 8px/10px var(--ui); display: grid; grid-auto-rows: 1fr; height: 100%; align-content: start; padding-bottom: 182px; }
.cats li { padding-left: 4px; display: flex; align-items: center; white-space: nowrap; }
.cats .sel { background: #4f9bff; }
.prefs-main { margin: 0 12px 0 6px; padding-top: 1px; }
.pickers { display: grid; grid-template-columns: 97px 199px; gap: 7px 5px; align-items: center; white-space: nowrap; }
fieldset { min-width: 0; margin: 7px 0 0; padding: 6px 7px 3px; border: 1px solid #bcbcbc; box-shadow: 1px 1px #f4f4f4; }
fieldset.log { margin-top: 8px; }
legend { margin-left: 6px; padding: 0 5px; line-height: 12px; }
.opts { display: grid; grid-template-columns: 203px 1fr; grid-auto-rows: 1fr; height: 149px; }
.hist { display: grid; grid-template: 18px 18px 18px 22px / 86px 83px 67px; column-gap: 8px; align-items: center; color: #9a9a9a; margin: -3px 0 0; }
.r { justify-self: end; white-space: nowrap; }
.meta { grid-area: 1 / 2; }
.file { grid-area: 2 / 2; }
.both { grid-area: 3 / 2; }
.hist .choose { grid-area: 2 / 3 / 4 / 4; align-self: start; margin-top: 3px; }
.edit { grid-area: 4 / 1; }
.hist .sess { grid-area: 4 / 2; align-self: end; }
.resetall { display: block; width: 136px; margin: 10px auto 0; }
.prefs-btns { display: flex; flex-direction: column; gap: 7px; padding-top: 1px; }
.is-body { display: grid; grid-template-columns: minmax(0, 1fr) 240px; gap: 22px; padding: 5px 10px 0 8px; align-items: start; }
.preview { margin-top: 62px; aspect-ratio: 449 / 274; background: #949494; border: 1px solid #444; }
.is-form { display: grid; grid-template: 22px 20px 23px repeat(4, 24px) / 74px 54px 101px; column-gap: 5px; align-items: center; }
.is-form .val, .is-form .full { grid-column: 2 / 4; }
.is-form input[type="text"] { width: 100%; height: 17px; border: 1px solid #999; background: #fff; padding: 0 3px; outline: none; }
.val { display: flex; justify-content: space-between; align-items: center; padding: 0 2px 0 4px; }
.dim { justify-content: flex-start; gap: 8px; padding-left: 3px; }
.tiny { width: 10px; height: 10px; border: 1px solid #aaa; display: grid; place-items: center; }
.bracket { grid-area: 4 / 1 / 7 / 2; }
.is-form label[for="iw"] { grid-area: 4 / 1; }
.is-form label[for="ih"] { grid-area: 5 / 1; }
.is-form label[for="ir"] { grid-area: 6 / 1; }
.is-btns { margin-top: auto; display: grid; grid-template-columns: 106px 120px; gap: 7px; justify-content: end; padding: 0 11px 17px 0; }

/* script alert */
.alert { position: absolute; left: calc(50% + 30px); top: 222px; width: 340px; background: #fff; border: 1px solid #aaa; color: #111; font: 11px/15px var(--win); box-shadow: 0 4px 18px 4px rgba(0,0,0,.35); }
.alert-title { display: flex; justify-content: space-between; align-items: center; height: 29px; padding: 0 9px 0 8px; }
.alert-body { display: flex; gap: 9px; padding: 27px 0 25px 26px; height: 113px; }
.alert-body p { margin: 0; white-space: nowrap; }
.alert-foot { background: #efefef; height: 49px; display: flex; justify-content: flex-end; align-items: center; padding-right: 9px; }
.alert-foot button { width: 86px; height: 24px; border: 2px solid #0078d7; background: #e1e1e1; }

/* layers panel */
.layers { width: 240px; height: 767px; background: #535353; display: flex; flex-direction: column; color: #eee; }
.layers .strip { height: 13px; }
.tabs { height: 17px; background: #3a3a3a; display: flex; align-items: center; justify-content: space-between; padding-right: 4px; }
.tab { background: #535353; padding: 1px 7px 0; line-height: 16px; font-weight: bold; font-size: 9px; }
.lrow { height: 28px; display: flex; align-items: center; padding: 0 4px; border-bottom: 1px solid #3a3a3a; box-shadow: inset 0 1px #5e5e5e; justify-content: space-between; }
.lock { height: 30px; gap: 9px; padding-left: 5px; }
.push { margin-left: auto; }
.kind { width: 90px; }
.layers select.kind { padding-left: 20px; background: url("data:image/svg+xml,%3Csvg xmlns='http://www.w3.org/2000/svg' width='12' height='12'%3E%3Ccircle cx='7' cy='5' r='3.500' fill='none' stroke='%23ddd' stroke-width='1.500'/%3E%3Cpath d='M4 8l-3 3' stroke='%23ddd' stroke-width='2'/%3E%3C/svg%3E") no-repeat 6px center, url("data:image/svg+xml,%3Csvg xmlns='http://www.w3.org/2000/svg' width='6' height='10'%3E%3Cpath d='M0 4l3-4 3 4zM0 6h6l-3 4z' fill='%23ddd'/%3E%3C/svg%3E") no-repeat right 4px center, linear-gradient(#757575, #5e5e5e); }
.ghost.t { font: bold 15px/14px "Liberation Serif", serif; }
.blend { width: 129px; }
.llist { flex: 1; background: #444; padding-right: 15px; box-shadow: inset -15px 0 #3f3f3f; }
.llist li { height: 57px; display: flex; align-items: center; background: #535353; border-bottom: 1px solid #363636; }
.llist .active { background: linear-gradient(90deg, #535353 31px, #6d7d94 31px); }
.eye { width: 31px; align-self: stretch; display: grid; place-items: center; border-right: 1px solid #3a3a3a; }
.thumb { margin: 0 8px 0 1px; }
.name { padding-top: 3px; }
.bg { font-style: italic; }
.lk { margin-left: auto; margin-right: 17px; }
.lfoot { height: 20px; display: flex; align-items: center; padding: 1px 1px 0 31px; border-top: 1px solid #666; border-bottom: 1px solid #333; }
.lfoot .ghost { width: 27px; height: 18px; }
.fx { font: italic bold 12px/14px var(--ui); }
.lgrip { height: 8px; padding-top: 1px; }

/* timeline */
.timeline { margin-left: 3px; height: 20px; display: flex; align-items: center; justify-content: space-between; background: #3a3a3a; border-top: 2px solid #2c2c2c; border-bottom: 1px solid #777; padding-right: 5px; }

/* right dock */
.dock { width: 39px; background: #535353; border-left: 1px solid #2e2e2e; }
.grp { border-bottom: 1px solid #2e2e2e; border-top: 1px solid #636363; padding-top: 3px; }
.grp button { width: 100%; height: 31px; display: flex; align-items: center; justify-content: center; }
.grp .grip-h + button:not(:last-child) { margin-bottom: -3px; }
.grp .glyph { font: bold 16px/20px var(--win); color: #ccc; }

/* taskbar */
.taskbar { height: 41px; display: flex; align-items: center; background: #212121; color: #fff; font-family: var(--win); }
.start { width: 48px; display: grid; place-items: center; }
.search { width: 344px; height: 41px; border: 0; background: #303030; padding: 2px 12px 0; font-size: 14px; outline: none; }
.search::placeholder { color: #a0a0a0; }
.apps { display: flex; height: 41px; }
.apps button { width: 49px; display: grid; place-items: center; border-bottom: 3px solid transparent; padding-top: 3px; }
.apps .run { border-bottom-color: #76b0ea; }
.apps .cur { background: #4a4a4a; }
.ps-task { width: 22px; height: 21px; border: 2px solid #2fa8e0; background: #001d33; color: #5cc4f0; font: bold 11px/16px var(--win); }
.tray { margin-left: auto; display: flex; align-items: center; gap: 8px; padding-right: 4px; }
.clock { font-size: 11px; line-height: 16px; display: flex; flex-direction: column; align-items: center; padding: 0 6px 0 2px; border-right: 1px solid #777; }
```
FILE: rulers.js
```js
// Ruler cells: one per 50 document pixels.
function fill(id, end) {
  const el = document.getElementById(id);
  for (let v = 0; v <= end; v += 50) {
    const cell = document.createElement('span');
    cell.textContent = v;
    el.appendChild(cell);
  }
}
fill('rx', 1850);
fill('ry', 1100);
```
